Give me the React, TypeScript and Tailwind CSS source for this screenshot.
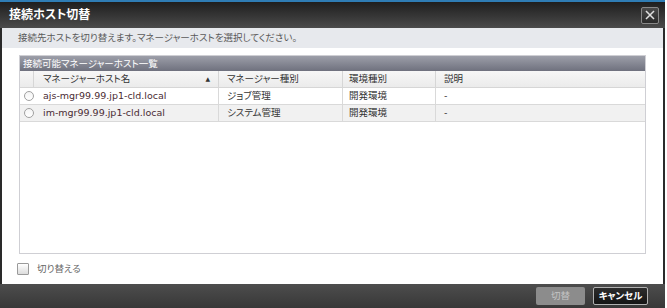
const font = "font-['DejaVu_Sans','Noto_Sans_CJK_JP',sans-serif] [font-feature-settings:'palt']";

type HostRow = {
  host: string;
  managerType: string;
  env: string;
  note: string;
};

const rows: HostRow[] = [
  { host: 'ajs-mgr99.99.jp1-cld.local', managerType: 'ジョブ管理', env: '開発環境', note: '-' },
  { host: 'im-mgr99.99.jp1-cld.local', managerType: 'システム管理', env: '開発環境', note: '-' },
];

const cols = 'grid grid-cols-[14px_185px_124px_93px_1fr]';

const Radio = () => (
  <div className="flex items-center pl-[4px]">
    <span className="block h-[10px] w-[10px] rounded-full border border-[#a0a0a0] bg-gradient-to-b from-[#f4f4f4] to-white" />
  </div>
);

const HostTable = () => {
  return (
    <div className="flex h-[199px] flex-col border border-[#cfcfd4] bg-white">
      <div className="flex h-[15px] items-center bg-gradient-to-b from-[#9d9fa9] to-[#6f717e] pl-[3px] text-[9.5px] leading-none text-white">
        接続可能マネージャーホスト一覧
      </div>
      <div
        className={`${cols} h-[17px] border-b border-[#d6d6d6] bg-gradient-to-b from-[#f7f7f7] to-[#ebebeb] text-[9.5px] leading-none text-[#333]`}
      >
        <div className="border-r border-[#d6d6d6]" />
        <div className="flex items-center justify-between border-r border-[#d6d6d6] pl-[9px] pr-[8px]">
          <span>マネージャーホスト名</span>
          <span className="text-[6px]">▲</span>
        </div>
        <div className="flex items-center border-r border-[#d6d6d6] pl-[8px]">マネージャー種別</div>
        <div className="flex items-center border-r border-[#d6d6d6] pl-[6px]">環境種別</div>
        <div className="flex items-center pl-[8px]">説明</div>
      </div>
      {rows.map((row, index) => {
        return (
          <div
            key={'host-' + index}
            className={`${cols} h-[17px] border-b border-[#d9d9d9] text-[9.5px] leading-none ${
              index % 2 === 0 ? 'bg-white' : 'bg-[#f1f1f1]'
            }`}
          >
            <Radio />
            <div className="flex items-center border-r border-[#d9d9d9] pl-[9px] text-[#4a2c34]">{row.host}</div>
            <div className="flex items-center border-r border-[#d9d9d9] pl-[8px] text-[#333]">{row.managerType}</div>
            <div className="flex items-center border-r border-[#d9d9d9] pl-[6px] text-[#333]">{row.env}</div>
            <div className="flex items-center pl-[8px] text-[#333]">{row.note}</div>
          </div>
        );
      })}
    </div>
  );
};

const App = () => {
  return (
    <div className={`h-[308px] w-[667px] bg-white ${font}`}>
      <div className="flex h-full w-[665px] flex-col bg-[#2a2a2a] px-[2px]">
        <div className="-mx-[2px] flex h-[28px] items-center justify-between border-t-[2px] border-[#2f7db5] bg-gradient-to-b from-[#1f1f1f] to-[#4b4b4b] pl-[9px] pr-[6px]">
          <span className="text-[12px] font-bold leading-none text-white">接続ホスト切替</span>
          <button className="flex h-[17px] w-[18px] items-center justify-center rounded-[2px] border border-[#888] bg-gradient-to-b from-[#4a4a4a] to-[#2a2a2a]">
            <svg width="10" height="10" viewBox="0 0 10 10">
              <path d="M1.5 1.5 L8.5 8.5 M8.5 1.5 L1.5 8.5" stroke="#e0e0e0" strokeWidth="1.5" strokeLinecap="square" />
            </svg>
          </button>
        </div>

        <div className="flex h-[20px] items-center bg-[#e7e9ed] pl-[16px] text-[9.5px] leading-none text-[#5a5a5a]">
          接続先ホストを切り替えます。マネージャーホストを選択してください。
        </div>

        <div className="flex flex-1 flex-col bg-white px-[17px] pt-[7px]">
          <HostTable />
          <div className="mt-[9px] flex items-center gap-[8px]">
            <span className="-ml-[2px] block h-[12px] w-[12px] rounded-[1px] border border-[#9a9a9a] bg-gradient-to-b from-white to-[#dcdcdc]" />
            <span className="text-[9.5px] leading-none text-[#666]">切り替える</span>
          </div>
        </div>

        <div className="-mx-[2px] flex h-[24px] items-center justify-end gap-[8px] bg-gradient-to-b from-[#4d4d4d] to-[#383838] pr-[17px]">
          <button className="flex h-[18px] w-[49px] items-center justify-center rounded-[2px] bg-[#8c8c8c] text-[9.5px] leading-none text-[#c4c4c4]">
            切替
          </button>
          <button className="flex h-[18px] w-[55px] items-center justify-center rounded-[2px] border border-[#b0b0b0] bg-gradient-to-b from-[#2c2c2c] to-[#151515] text-[9.5px] font-bold leading-none text-white">
            キャンセル
          </button>
        </div>
      </div>
    </div>
  );
};

export default App;
